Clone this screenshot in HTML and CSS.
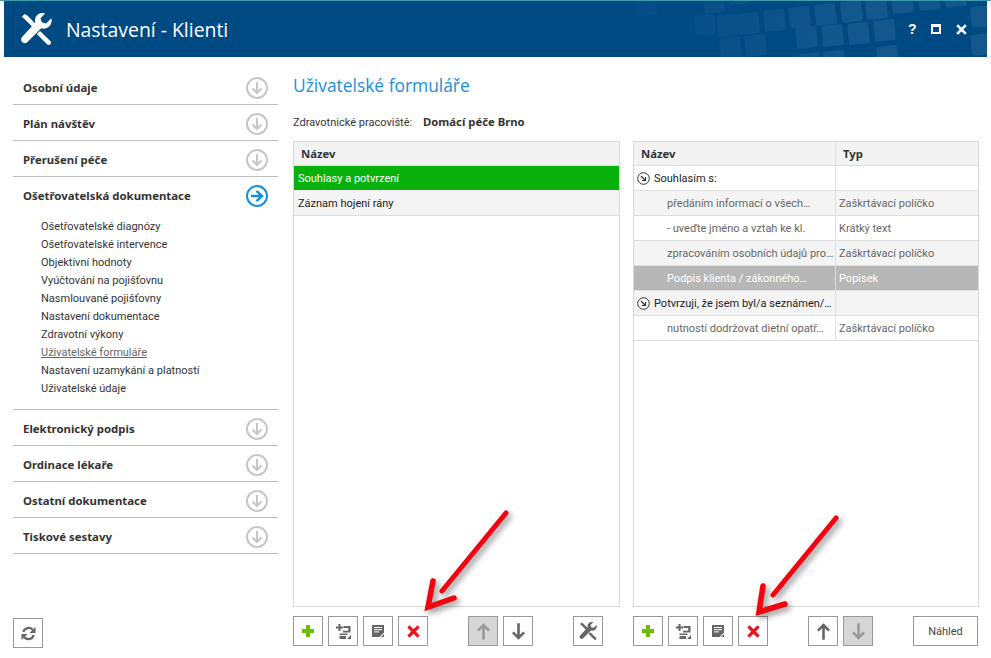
FILE: index.html
```html
<!DOCTYPE html>
<html lang="cs">
<head>
<meta charset="utf-8">
<title>Nastavení - Klienti</title>
<link rel="stylesheet" href="styles.css">
</head>
<body>
<svg class="defs" width="0" height="0" aria-hidden="true">
  <defs>
    <symbol id="tools" viewBox="0 0 32 32">
      <path d="M31.300 5.200c.9 3.300 0 6.300-2.300 8.400-2.300 2-5 2.500-7.800 1.600L7.500 28.900c-1.500 1.600-3.900 1.700-5.400.2-1.500-1.500-1.400-3.900.2-5.400L15.300 9.600c-.8-2.900-.2-5.600 1.900-7.600C19.300.1 22.200-.5 25.200.4L20.500 5.200l1.200 4.100 4.300 1.100z"/>
      <path d="M1.800 3.800 4.600 1l2.800 1.600 8.300 8.300-3.100 3.200-8.400-8.300zM20 18l10.300 9.900c1 1 1 2.400 0 3.300-.9 1-2.300 1-3.300 0L16.800 21.100z"/>
    </symbol>
    <symbol id="circle-down" viewBox="0 0 22 22">
      <circle cx="11" cy="11" r="10" fill="none" stroke="currentColor" stroke-width="2"/>
      <path d="M11 5v11M6.500 11.500 11 16l4.500-4.500" fill="none" stroke="currentColor" stroke-width="2"/>
    </symbol>
    <symbol id="circle-right" viewBox="0 0 22 22">
      <circle cx="11" cy="11" r="10" fill="none" stroke="currentColor" stroke-width="2"/>
      <path d="M5 11h11M10.500 5.800 16 11l-5.500 5.200" fill="none" stroke="currentColor" stroke-width="2.400"/>
    </symbol>
    <symbol id="tree" viewBox="0 0 13 13">
      <circle cx="6.500" cy="6.500" r="5.800" fill="none" stroke="#333" stroke-width="1"/>
      <path d="M4 4l4.500 4.500M8.500 5v3.500H5" fill="none" stroke="#333" stroke-width="1.100"/>
    </symbol>
    <symbol id="plus" viewBox="0 0 12 12">
      <path d="M4 0h4v4h4v4H8v4H4V8H0V4h4z"/>
    </symbol>
    <symbol id="add-tree" viewBox="0 0 15 15">
      <path d="M2.500 0h2v2.500H7v2H4.500V7h-2V4.500H0v-2h2.500z"/>
      <path d="M7.500 2h7v6.500H7V6.800h5.200V4H7.500zM3.500 9.500h8v1.500h-8zM3.500 12h6.500v3H3.500z"/>
      <path d="M11 15l4-4v4z"/>
    </symbol>
    <symbol id="note" viewBox="0 0 12 12">
      <path d="M0 0h12v7.500L7.500 12H0z"/>
      <path d="M2 2.500h8M2 4.700h8M2 6.900h5" stroke="#fff" stroke-width="1" fill="none"/>
      <path d="M9 12l3-3v3z"/>
    </symbol>
    <symbol id="cross" viewBox="0 0 14 14">
      <path d="M1.500 1.500l11 11M12.500 1.500l-11 11" fill="none" stroke="currentColor" stroke-width="3.400"/>
    </symbol>
    <symbol id="up" viewBox="0 0 14 18">
      <path d="M7 18V2M1 8l6-6 6 6" fill="none" stroke="currentColor" stroke-width="2.800"/>
    </symbol>
    <symbol id="down" viewBox="0 0 14 18">
      <path d="M7 0v16M1 10l6 6 6-6" fill="none" stroke="currentColor" stroke-width="2.800"/>
    </symbol>
    <symbol id="refresh" viewBox="0 0 16 16">
      <path d="M2.500 6.500A5.800 5.800 0 0 1 12.500 4" fill="none" stroke="currentColor" stroke-width="2.400"/>
      <path d="M15.500 1v6.500H9z"/>
      <path d="M13.500 9.500A5.800 5.800 0 0 1 3.500 12" fill="none" stroke="currentColor" stroke-width="2.400"/>
      <path d="M.5 15V8.500H7z"/>
    </symbol>
  </defs>
</svg>

<div class="app">
  <div class="topline"></div>
  <header class="header">
    <svg class="pattern" viewBox="0 0 983 56" aria-hidden="true">
      <defs>
        <linearGradient id="fade" gradientUnits="userSpaceOnUse" x1="570" y1="0" x2="860" y2="0">
          <stop offset="0" stop-color="#fff" stop-opacity="0"/>
          <stop offset="1" stop-color="#fff" stop-opacity=".075"/>
        </linearGradient>
      </defs>
      <g fill="url(#fade)">
        <rect x="632" y="-5" width="20" height="20" rx="2" transform="rotate(-6 642 5)"/>
        <rect x="700" y="-8" width="20" height="20" rx="2" transform="rotate(-6 710 2)"/>
        <rect x="725" y="-11" width="20" height="14" rx="2" transform="rotate(-6 735 -2)"/>
        <rect x="691" y="14" width="20" height="20" rx="2" transform="rotate(-6 701 24)"/>
        <rect x="713" y="14" width="21" height="21" rx="2" transform="rotate(-6 723 24)"/>
        <rect x="734" y="12" width="21" height="21" rx="2" transform="rotate(-6 744 22)"/>
        <rect x="760" y="9" width="21" height="21" rx="2" transform="rotate(-6 770 19)"/>
        <rect x="785" y="6" width="21" height="21" rx="2" transform="rotate(-6 795 16)"/>
        <rect x="811" y="3" width="21" height="21" rx="2" transform="rotate(-6 821 13)"/>
        <rect x="837" y="0" width="21" height="21" rx="2" transform="rotate(-6 847 10)"/>
        <rect x="862" y="-3" width="21" height="21" rx="2" transform="rotate(-6 872 7)"/>
        <rect x="888" y="-7" width="21" height="19" rx="2" transform="rotate(-6 898 3)"/>
        <rect x="915" y="-10" width="21" height="19" rx="2" transform="rotate(-6 925 0)"/>
        <rect x="941" y="-12" width="21" height="18" rx="2" transform="rotate(-6 951 -3)"/>
        <rect x="967" y="5" width="21" height="21" rx="2" transform="rotate(-6 977 15)"/>
        <rect x="792" y="26" width="21" height="21" rx="2" transform="rotate(-6 802 36)"/>
        <rect x="818" y="24" width="21" height="21" rx="2" transform="rotate(-6 828 34)"/>
        <rect x="844" y="22" width="21" height="21" rx="2" transform="rotate(-6 854 32)"/>
        <rect x="870" y="19" width="21" height="21" rx="2" transform="rotate(-6 880 29)"/>
        <rect x="716" y="36" width="21" height="21" rx="2" transform="rotate(-6 726 46)"/>
        <rect x="741" y="34" width="21" height="21" rx="2" transform="rotate(-6 751 44)"/>
        <rect x="795" y="52" width="21" height="21" rx="2" transform="rotate(-6 805 62)"/>
        <rect x="820" y="50" width="21" height="21" rx="2" transform="rotate(-6 830 60)"/>
        <rect x="873" y="45" width="21" height="21" rx="2" transform="rotate(-6 883 55)"/>
        <rect x="967" y="33" width="21" height="21" rx="2" transform="rotate(-6 977 43)"/>
      </g>
    </svg>
    <svg class="logo"><use href="#tools"/></svg>
    <h1 class="app-title">Nastavení - Klienti</h1>
    <div class="controls">
      <span class="help">?</span>
      <span class="maximize"></span>
      <svg class="close"><use href="#cross"/></svg>
    </div>
  </header>

  <div class="content">
    <nav class="sidebar">
      <section class="section"><div class="section-head"><span>Osobní údaje</span><svg class="circle"><use href="#circle-down"/></svg></div></section>
      <section class="section"><div class="section-head"><span>Plán návštěv</span><svg class="circle"><use href="#circle-down"/></svg></div></section>
      <section class="section"><div class="section-head"><span>Přerušení péče</span><svg class="circle"><use href="#circle-down"/></svg></div></section>
      <section class="section">
        <div class="section-head"><span>Ošetřovatelská dokumentace</span><svg class="circle active"><use href="#circle-right"/></svg></div>
        <ul class="submenu">
          <li>Ošetřovatelské diagnózy</li>
          <li>Ošetřovatelské intervence</li>
          <li>Objektivní hodnoty</li>
          <li>Vyúčtování na pojišťovnu</li>
          <li>Nasmlouvané pojišťovny</li>
          <li>Nastavení dokumentace</li>
          <li>Zdravotní výkony</li>
          <li class="current">Uživatelské formuláře</li>
          <li>Nastavení uzamykání a platností</li>
          <li>Uživatelské údaje</li>
        </ul>
      </section>
      <section class="section"><div class="section-head"><span>Elektronický podpis</span><svg class="circle"><use href="#circle-down"/></svg></div></section>
      <section class="section"><div class="section-head"><span>Ordinace lékaře</span><svg class="circle"><use href="#circle-down"/></svg></div></section>
      <section class="section"><div class="section-head"><span>Ostatní dokumentace</span><svg class="circle"><use href="#circle-down"/></svg></div></section>
      <section class="section"><div class="section-head"><span>Tiskové sestavy</span><svg class="circle"><use href="#circle-down"/></svg></div></section>
      <button class="btn refresh-btn" type="button"><svg class="i-refresh"><use href="#refresh"/></svg></button>
    </nav>

    <main class="main">
      <h2 class="page-title">Uživatelské formuláře</h2>
      <div class="facility"><span class="facility-label">Zdravotnické pracoviště:</span><strong class="facility-name">Domácí péče Brno</strong></div>
      <div class="panels">
        <div class="panel panel-left">
          <div class="grid">
            <div class="row head"><div class="cell">Název</div></div>
            <div class="row selected"><div class="cell plain">Souhlasy a potvrzení</div></div>
            <div class="row alt"><div class="cell plain">Záznam hojení rány</div></div>
          </div>
          <div class="toolbar">
            <button class="btn" type="button"><svg class="i-plus"><use href="#plus"/></svg></button>
            <button class="btn" type="button"><svg class="i-add"><use href="#add-tree"/></svg></button>
            <button class="btn" type="button"><svg class="i-note"><use href="#note"/></svg></button>
            <button class="btn" type="button"><svg class="i-cross"><use href="#cross"/></svg></button>
            <button class="btn disabled push" type="button"><svg class="i-arrow"><use href="#up"/></svg></button>
            <button class="btn" type="button"><svg class="i-arrow"><use href="#down"/></svg></button>
            <button class="btn push" type="button"><svg class="i-tools"><use href="#tools"/></svg></button>
          </div>
        </div>
        <div class="panel panel-right">
          <div class="grid">
            <div class="row head two"><div class="cell">Název</div><div class="cell type">Typ</div></div>
            <div class="row two"><div class="cell group"><svg class="i-tree"><use href="#tree"/></svg>Souhlasím s:</div><div class="cell type"></div></div>
            <div class="row two alt child"><div class="cell">předáním informací o všech…</div><div class="cell type">Zaškrtávací políčko</div></div>
            <div class="row two child"><div class="cell">- uveďte jméno a vztah ke kl.</div><div class="cell type">Krátký text</div></div>
            <div class="row two alt child"><div class="cell">zpracováním osobních údajů pro…</div><div class="cell type">Zaškrtávací políčko</div></div>
            <div class="row two child picked"><div class="cell">Podpis klienta / zákonného…</div><div class="cell type">Popisek</div></div>
            <div class="row two alt"><div class="cell group"><svg class="i-tree"><use href="#tree"/></svg>Potvrzuji, že jsem byl/a seznámen/…</div><div class="cell type"></div></div>
            <div class="row two child"><div class="cell">nutností dodržovat dietní opatř…</div><div class="cell type">Zaškrtávací políčko</div></div>
          </div>
          <div class="toolbar">
            <button class="btn" type="button"><svg class="i-plus"><use href="#plus"/></svg></button>
            <button class="btn" type="button"><svg class="i-add"><use href="#add-tree"/></svg></button>
            <button class="btn" type="button"><svg class="i-note"><use href="#note"/></svg></button>
            <button class="btn" type="button"><svg class="i-cross"><use href="#cross"/></svg></button>
            <button class="btn push" type="button"><svg class="i-arrow"><use href="#up"/></svg></button>
            <button class="btn disabled" type="button"><svg class="i-arrow"><use href="#down"/></svg></button>
            <button class="btn text push" type="button">Náhled</button>
          </div>
        </div>
      </div>
    </main>
  </div>

  <svg class="annotations" viewBox="0 0 991 658" aria-hidden="true">
    <g fill="none" stroke="#f5000f" stroke-linecap="round" stroke-linejoin="miter">
      <path class="shaft" d="M506 513 442 591"/>
      <path class="barb" d="M433 581 428 607 454 598"/>
      <path class="shaft" d="M836 518 773 595"/>
      <path class="barb" d="M763 586 759 612 785 604"/>
    </g>
  </svg>
</div>
</body>
</html>
```
FILE: styles.css
```css
* { box-sizing: border-box; }
html, body { margin: 0; padding: 0; }
body {
  width: 991px;
  height: 658px;
  overflow: hidden;
  background: #fff;
  font-family: Roboto, "Liberation Sans", sans-serif;
  font-size: 11px;
  color: #222;
}
.defs { position: absolute; }
.app {
  position: relative;
  width: 991px;
  height: 658px;
  display: flex;
  flex-direction: column;
}
.topline { height: 1px; background: #3f9bb0; flex: none; }
.header {
  position: relative;
  flex: none;
  height: 56px;
  margin: 0 4px;
  background: #004a84;
  display: flex;
  align-items: center;
  padding-left: 16px;
  overflow: hidden;
}
.pattern { position: absolute; inset: 0; width: 983px; height: 56px; }
.logo { position: relative; width: 32px; height: 32px; fill: #fff; flex: none; }
.app-title {
  position: relative;
  margin: 0 0 0 14px;
  font-family: "Open Sans", sans-serif;
  font-size: 19.400px;
  font-weight: 400;
  color: #fff;
}
.controls {
  position: relative;
  margin-left: auto;
  margin-right: 20px;
  display: flex;
  align-items: center;
  gap: 15px;
  color: #fff;
}
.help { font-family: "Liberation Sans", sans-serif; font-weight: 700; font-size: 14px; line-height: 14px; width: 8px; }
.maximize { display: block; width: 10px; height: 10px; border: 2px solid #fff; border-top-width: 3px; border-bottom-width: 2px; background: #004a84; }
.close { width: 11px; height: 11px; color: #fff; }

.content { flex: 1; display: flex; min-height: 0; padding: 0 12px 0 13px; gap: 15px; }
.sidebar { width: 265px; flex: none; display: flex; flex-direction: column; padding: 12px 0 10px; }
.section { border-bottom: 1px solid #bdbdbd; }
.section-head {
  height: 36px;
  padding: 1px 10px 0;
  margin-bottom: -1px;
  display: flex;
  align-items: center;
  justify-content: space-between;
  font-family: "Noto Sans", sans-serif;
  font-weight: 700;
  font-size: 11.400px;
  color: #333;
}
.circle { width: 22px; height: 22px; color: #c6c6c6; flex: none; }
.circle.active { color: #0f90e0; }
.submenu { list-style: none; margin: 5px 0 0; padding: 0 0 12px 28px; color: #333; }
.submenu li { height: 18px; line-height: 20px; }
.submenu .current { color: #666; text-decoration: underline; }
.refresh-btn { margin-top: auto; }

.main { width: 686px; flex: none; display: flex; flex-direction: column; }
.page-title { margin: 16px 0 0; height: 24px; line-height: 24px; font-family: "Open Sans", sans-serif; font-size: 17.400px; font-weight: 400; color: #1b8ede; }
.facility { margin-top: 16px; height: 18px; line-height: 18px; display: flex; color: #333; }
.facility-label { width: 130px; padding-top: 1px; }
.facility-name { font-family: "Noto Sans", sans-serif; font-size: 11.300px; font-weight: 700; }
.panels { margin-top: 10px; display: flex; gap: 13px; }
.panel-left { width: 327px; }
.panel-right { width: 346px; }
.grid { height: 466px; border: 1px solid #d9d9d9; }
.row { height: 25px; line-height: 23px; display: flex; border-bottom: 1px solid #dedede; }
.row.head { height: 24px; background: #f3f3f3; font-family: "Noto Sans", sans-serif; font-size: 11.300px; font-weight: 700; color: #333; line-height: 22px; }
.cell { flex: 1; min-width: 0; padding: 1px 0 0 4px; white-space: nowrap; overflow: hidden; }
.two .cell { flex: none; width: 201px; }
.two .cell.type { flex: 1; width: auto; border-left: 1px solid #dedede; padding-left: 3px; }
.row.head .cell, .row.head .cell.type { padding-left: 7px; }
.alt { background: #f4f4f4; }
.selected { background: #08b10b; color: #fff; border-bottom-color: #fff; }
.child .cell:first-child { padding-left: 33px; }
.child .cell { color: #666; }
.picked { background: #b7b7b7; }
.row.picked .cell { color: #fff; }
.picked .cell.type { border-left-color: #ddd; }
.group { display: flex; align-items: center; padding-left: 3px; gap: 4px; color: #222; }
.i-tree { width: 13px; height: 13px; flex: none; }

.toolbar { margin-top: 9px; display: flex; gap: 5px; }
.btn {
  width: 30px;
  height: 30px;
  padding: 0;
  flex: none;
  background: #fff;
  border: 1px solid #999;
  display: flex;
  align-items: center;
  justify-content: center;
  color: #666;
  fill: #666;
  font-family: inherit;
  font-size: 11px;
}
.btn.push { margin-left: 35px; }
.btn.disabled { background: #d6d6d6; color: #999; }
.btn.text { width: 65px; color: #444; }
.i-plus { width: 12px; height: 12px; fill: #6cbf00; }
.i-add { width: 15px; height: 15px; }
.i-note { width: 12px; height: 12px; }
.i-cross { width: 13px; height: 13px; color: #e8141e; }
.i-arrow { width: 13px; height: 17px; }
.i-tools { width: 18px; height: 18px; }
.i-refresh { width: 15px; height: 15px; }

.annotations {
  position: absolute;
  inset: 0;
  width: 991px;
  height: 658px;
  pointer-events: none;
  filter: drop-shadow(3px 3px 3px rgba(0, 0, 0, .45));
}
.shaft { stroke-width: 5; }
.barb { stroke-width: 5.500; }
```
